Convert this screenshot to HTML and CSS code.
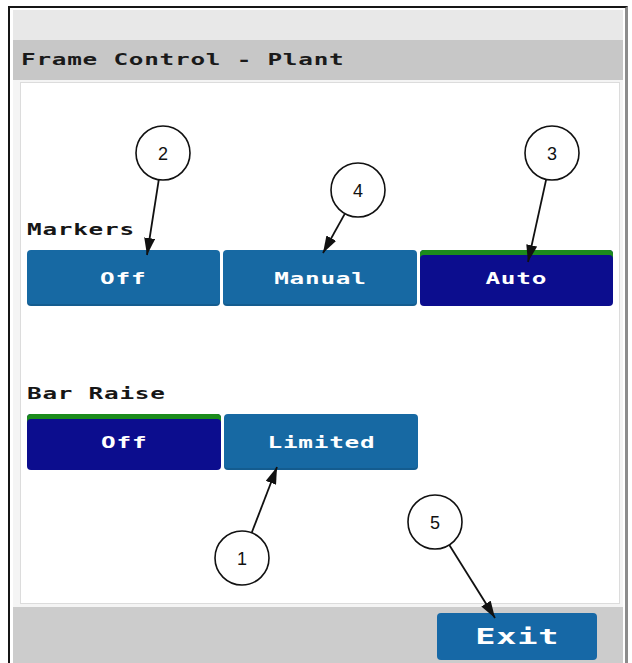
FILE: index.html
```html
<!DOCTYPE html>
<html lang="en">
<head>
    <meta charset="UTF-8">
    <title>Frame Control - Plant</title>
    <link rel="stylesheet" href="styles.css">
</head>
<body>
<div class="screen">
    <div class="topStrip"></div>
    <div class="titleBar"><span class="wide">Frame Control - Plant</span></div>
    <div class="content">
        <div class="panel">
            <div class="group">
                <div class="label"><span class="wide">Markers</span></div>
                <div class="row">
                    <div class="btn"><span class="wide">Off</span></div>
                    <div class="btn"><span class="wide">Manual</span></div>
                    <div class="btn active"><span class="wide">Auto</span></div>
                </div>
            </div>
            <div class="group second">
                <div class="label"><span class="wide">Bar Raise</span></div>
                <div class="row">
                    <div class="btn active"><span class="wide">Off</span></div>
                    <div class="btn"><span class="wide">Limited</span></div>
                </div>
            </div>
        </div>
    </div>
    <div class="footer">
        <div class="exit"><span class="wide">Exit</span></div>
    </div>
</div>
<svg class="callouts" width="632" height="663" viewBox="0 0 632 663">
    <defs>
        <marker id="head" markerWidth="17" markerHeight="11" refX="17" refY="5.5" orient="auto" markerUnits="userSpaceOnUse">
            <path d="M0,0 L17,5.5 L0,11 z" fill="#111"/>
        </marker>
    </defs>
    <g class="lines">
        <line x1="158.8" y1="179.7" x2="147" y2="255" marker-end="url(#head)"/>
        <line x1="344.9" y1="213.6" x2="323" y2="253" marker-end="url(#head)"/>
        <line x1="546.2" y1="179.4" x2="528" y2="262" marker-end="url(#head)"/>
        <line x1="251.7" y1="532.8" x2="277" y2="467" marker-end="url(#head)"/>
        <line x1="449.3" y1="544.9" x2="495" y2="618" marker-end="url(#head)"/>
    </g>
    <g class="rings">
        <circle cx="163" cy="153" r="27"/>
        <circle cx="358" cy="190" r="27"/>
        <circle cx="552" cy="153" r="27"/>
        <circle cx="242" cy="558" r="27"/>
        <circle cx="435" cy="522" r="27"/>
    </g>
    <g class="nums">
        <text x="163" y="160">2</text>
        <text x="358" y="197">4</text>
        <text x="552" y="160">3</text>
        <text x="242" y="565">1</text>
        <text x="435" y="529">5</text>
    </g>
</svg>
</body>
</html>
```

FILE: styles.css
```css
body {
    margin: 0;
    overflow: hidden;
    background: #ffffff;
    font-family: "DejaVu Sans Mono", "Liberation Mono", monospace;
}

.screen {
    margin: 6px 0 0 8px;
    width: 610px;
    height: 660px;
    padding: 2px 2px 0 3px;
    border-left: 2px solid #161616;
    border-top: 2px solid #161616;
    border-right: 3px solid #8c8c8c;
    background: #ffffff;
}

.wide {
    display: inline-block;
    font-size: 16px;
    font-weight: bold;
    letter-spacing: 0.5px;
    transform: scaleX(1.52);
    transform-origin: left center;
}

.topStrip {
    height: 30px;
    background: #e8e8e8;
}

.titleBar {
    height: 40px;
    line-height: 40px;
    padding-left: 8px;
    background: #c7c7c7;
    color: #1a1a1a;
}

.content {
    padding: 2px 3px 3px 7px;
    background: #f4f4f4;
}

.panel {
    box-sizing: border-box;
    height: 522px;
    padding: 137px 6px 0 6px;
    border: 1px solid #dcdcdc;
    background: #ffffff;
}

.group.second {
    margin-top: 78px;
}

.label {
    height: 20px;
    line-height: 20px;
    margin-bottom: 10px;
    color: #161616;
}

.row {
    display: flex;
    gap: 3px;
}

.btn {
    width: 194px;
    height: 56px;
    border-radius: 4px;
    background: #1769a3;
    color: #ffffff;
    display: flex;
    align-items: center;
    justify-content: center;
    box-shadow: inset 0 -2px 0 rgba(0, 0, 0, 0.12);
}

.btn .wide,
.exit .wide {
    transform-origin: center center;
}

.btn.active {
    background: #0c0d8e;
    box-shadow: inset 0 5px 0 #1c8c1c;
}

.footer {
    height: 60px;
    display: flex;
    justify-content: flex-end;
    padding: 6px 26px 0 0;
    background: #cccccc;
}

.exit {
    width: 160px;
    height: 47px;
    border-radius: 4px;
    background: #1668a6;
    color: #ffffff;
    display: flex;
    align-items: center;
    justify-content: center;
}

.exit .wide {
    font-size: 21px;
    letter-spacing: 0.5px;
    transform: scaleX(1.6);
}

.callouts {
    position: absolute;
    top: 0;
    left: 0;
    pointer-events: none;
}

.lines line {
    stroke: #111111;
    stroke-width: 1.8;
}

.rings circle {
    fill: none;
    stroke: #111111;
    stroke-width: 1.6;
}

.nums text {
    font-family: "Liberation Sans", Arial, sans-serif;
    font-size: 18px;
    text-anchor: middle;
    fill: #111111;
}
```
